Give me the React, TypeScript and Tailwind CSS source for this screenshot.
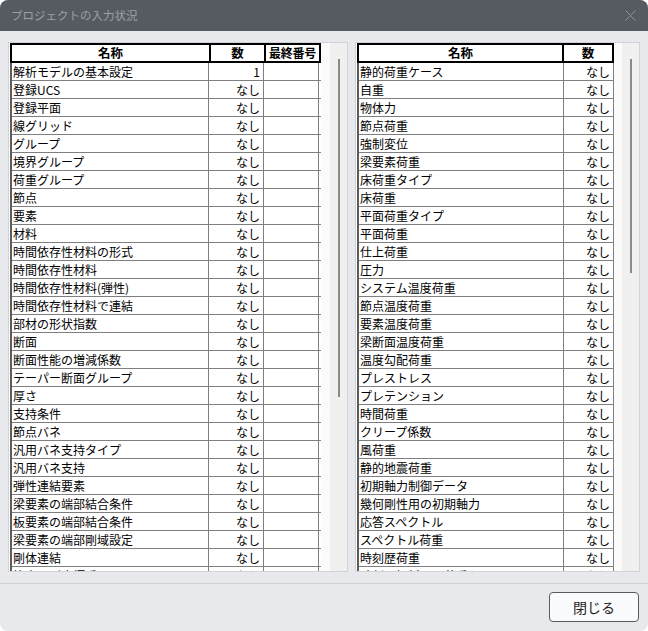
import React from 'react';

type Item = { name: string; count: string };

const modelItems: Item[] = [
  { name: '解析モデルの基本設定', count: '1' },
  { name: '登録UCS', count: 'なし' },
  { name: '登録平面', count: 'なし' },
  { name: '線グリッド', count: 'なし' },
  { name: 'グループ', count: 'なし' },
  { name: '境界グループ', count: 'なし' },
  { name: '荷重グループ', count: 'なし' },
  { name: '節点', count: 'なし' },
  { name: '要素', count: 'なし' },
  { name: '材料', count: 'なし' },
  { name: '時間依存性材料の形式', count: 'なし' },
  { name: '時間依存性材料', count: 'なし' },
  { name: '時間依存性材料(弾性)', count: 'なし' },
  { name: '時間依存性材料で連結', count: 'なし' },
  { name: '部材の形状指数', count: 'なし' },
  { name: '断面', count: 'なし' },
  { name: '断面性能の増減係数', count: 'なし' },
  { name: 'テーパー断面グループ', count: 'なし' },
  { name: '厚さ', count: 'なし' },
  { name: '支持条件', count: 'なし' },
  { name: '節点バネ', count: 'なし' },
  { name: '汎用バネ支持タイプ', count: 'なし' },
  { name: '汎用バネ支持', count: 'なし' },
  { name: '弾性連結要素', count: 'なし' },
  { name: '梁要素の端部結合条件', count: 'なし' },
  { name: '板要素の端部結合条件', count: 'なし' },
  { name: '梁要素の端部剛域設定', count: 'なし' },
  { name: '剛体連結', count: 'なし' },
  { name: '節点局所座標系', count: 'なし' },
];

const loadItems: Item[] = [
  { name: '静的荷重ケース', count: 'なし' },
  { name: '自重', count: 'なし' },
  { name: '物体力', count: 'なし' },
  { name: '節点荷重', count: 'なし' },
  { name: '強制変位', count: 'なし' },
  { name: '梁要素荷重', count: 'なし' },
  { name: '床荷重タイプ', count: 'なし' },
  { name: '床荷重', count: 'なし' },
  { name: '平面荷重タイプ', count: 'なし' },
  { name: '平面荷重', count: 'なし' },
  { name: '仕上荷重', count: 'なし' },
  { name: '圧力', count: 'なし' },
  { name: 'システム温度荷重', count: 'なし' },
  { name: '節点温度荷重', count: 'なし' },
  { name: '要素温度荷重', count: 'なし' },
  { name: '梁断面温度荷重', count: 'なし' },
  { name: '温度勾配荷重', count: 'なし' },
  { name: 'プレストレス', count: 'なし' },
  { name: 'プレテンション', count: 'なし' },
  { name: '時間荷重', count: 'なし' },
  { name: 'クリープ係数', count: 'なし' },
  { name: '風荷重', count: 'なし' },
  { name: '静的地震荷重', count: 'なし' },
  { name: '初期軸力制御データ', count: 'なし' },
  { name: '幾何剛性用の初期軸力', count: 'なし' },
  { name: '応答スペクトル', count: 'なし' },
  { name: 'スペクトル荷重', count: 'なし' },
  { name: '時刻歴荷重', count: 'なし' },
  { name: '時刻歴解析用の荷重ケース', count: 'なし' },
];

const font = { fontFamily: '"Noto Sans CJK JP", "Noto Sans", sans-serif' };

const ScrollTrack: React.FC<{ thumb: string }> = ({ thumb }) => (
  <div className="w-[17px] shrink-0 bg-[#f0f0f0] pt-[16px] flex flex-col items-center">
    <div className={`w-[2px] bg-[#8a8a8a] ${thumb}`} />
  </div>
);

const App: React.FC = () => {
  return (
    <div className="w-[648px] h-[631px] bg-white" style={font}>
      <div className="w-full h-full rounded-[8px] overflow-hidden bg-[#e8e9ed] flex flex-col">
        {/* title bar */}
        <div className="h-[31px] shrink-0 bg-[#565b62] flex items-center justify-between pl-[11px] pr-[12px]">
          <span className="text-[11.5px] text-[#9ca0a6] leading-none">プロジェクトの入力状況</span>
          <svg width="11" height="11" viewBox="0 0 11 11" className="text-[#8e9298]">
            <path d="M0.5 0.5L10.5 10.5M10.5 0.5L0.5 10.5" stroke="currentColor" strokeWidth="1" />
          </svg>
        </div>

        {/* lists */}
        <div className="flex gap-[7px] px-[8px] pt-[11px] pb-[11px]">
          <div className="w-[340px] h-[530px] border border-[#d2d3d6] bg-[#fbfbfb] flex overflow-hidden">
            <div className="pl-[1px]">
              <div className="w-[311px] bg-white">
                <div className="flex h-[20px] border-t-2 border-b-2 border-l-2 border-black font-bold text-[12.5px] leading-[16px] text-black">
                  <div className="w-[199px] border-r-2 border-black text-center">名称</div>
                  <div className="w-[55px] border-r-2 border-black text-center">数</div>
                  <div className="w-[55px] border-r-2 border-black text-center whitespace-nowrap text-[12px] tracking-[-0.2px]">最終番号</div>
                </div>
                <div className="border-l-2 border-[#5c5c5c]">
                  {modelItems.map((it) => (
                    <div key={it.name} className="flex h-[18px] border-b border-[#7f7f7f] text-[12px] leading-[17px] text-black">
                      <div className="w-[197px] border-r border-[#7f7f7f] pl-[1px] whitespace-nowrap overflow-hidden">{it.name}</div>
                      <div className="w-[55px] border-r border-[#7f7f7f] text-right pr-[3px]">{it.count}</div>
                      <div className="w-[55px] border-r border-[#7f7f7f]" />
                    </div>
                  ))}
                </div>
              </div>
            </div>
            <div className="flex-1" />
            <ScrollTrack thumb="h-[338px]" />
          </div>

          <div className="w-[285px] h-[530px] border border-[#d2d3d6] bg-[#fbfbfb] flex overflow-hidden">
            <div className="pl-[1px]">
              <div className="w-[257px] bg-white">
                <div className="flex h-[20px] border-t-2 border-b-2 border-l-2 border-black font-bold text-[12.5px] leading-[16px] text-black">
                  <div className="w-[205px] border-r-2 border-black text-center">名称</div>
                  <div className="w-[50px] border-r-2 border-black text-center">数</div>
                </div>
                <div className="border-l-2 border-[#5c5c5c]">
                  {loadItems.map((it) => (
                    <div key={it.name} className="flex h-[18px] border-b border-[#7f7f7f] text-[12px] leading-[17px] text-black">
                      <div className="w-[205px] border-r border-[#7f7f7f] pl-[1px] whitespace-nowrap overflow-hidden">{it.name}</div>
                      <div className="w-[50px] border-r border-[#7f7f7f] text-right pr-[3px]">{it.count}</div>
                    </div>
                  ))}
                </div>
              </div>
            </div>
            <div className="flex-1" />
            <ScrollTrack thumb="h-[214px]" />
          </div>
        </div>

        {/* footer */}
        <div className="flex-1 border-t border-[#cfd0d4] flex justify-end items-start pt-[8px] pr-[9px]">
          <button className="w-[90px] h-[30px] rounded-[4px] border border-[#5a5a5a] bg-[#fafbfd] text-[14px] text-[#1e1e1e] leading-none">
            閉じる
          </button>
        </div>
      </div>
    </div>
  );
};

export default App;
